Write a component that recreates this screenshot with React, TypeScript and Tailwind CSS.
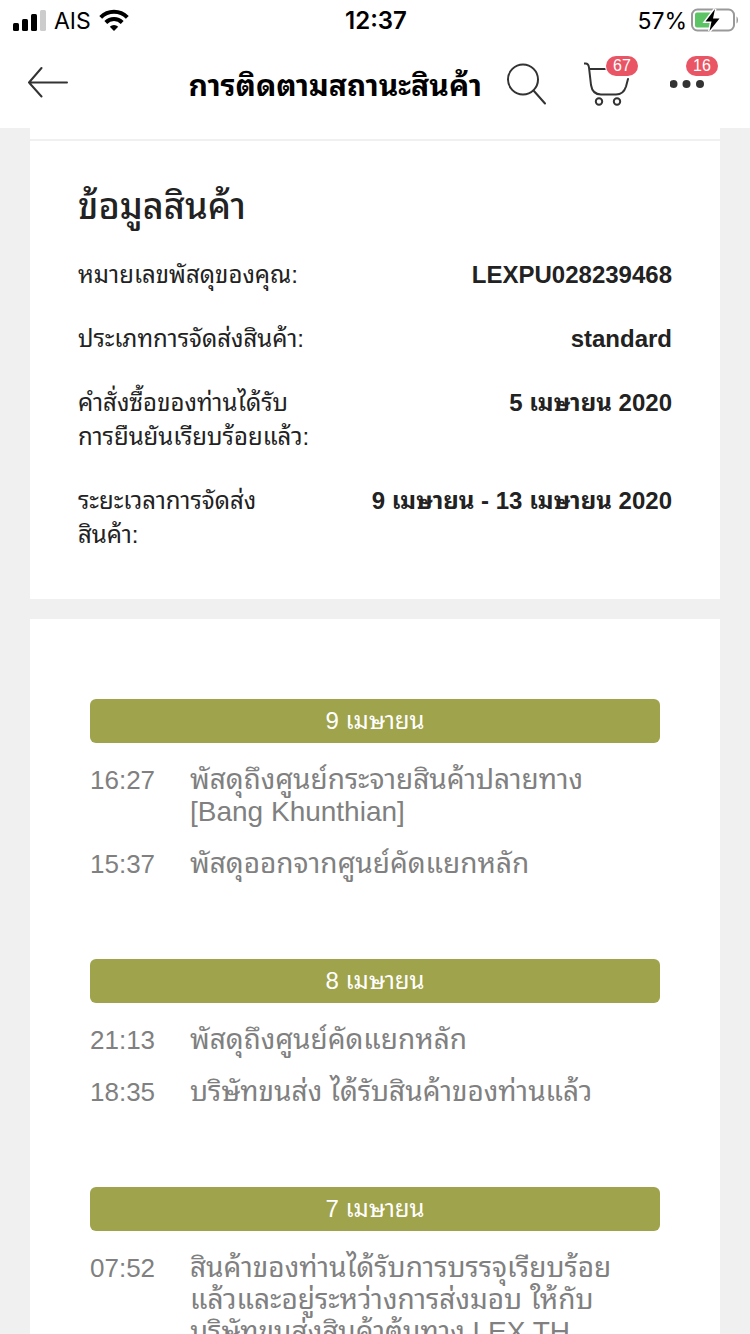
import React from "react"

type Detail = {
  label: string[]
  value: string
}

type TrackingEvent = {
  time: string
  lines: string[]
}

type TrackingDay = {
  date: string
  events: TrackingEvent[]
}

const details: Detail[] = [
  { label: ["หมายเลขพัสดุของคุณ:"], value: "LEXPU028239468" },
  { label: ["ประเภทการจัดส่งสินค้า:"], value: "standard" },
  {
    label: ["คำสั่งซื้อของท่านได้รับ", "การยืนยันเรียบร้อยแล้ว:"],
    value: "5 เมษายน 2020",
  },
  {
    label: ["ระยะเวลาการจัดส่ง", "สินค้า:"],
    value: "9 เมษายน - 13 เมษายน 2020",
  },
]

const days: TrackingDay[] = [
  {
    date: "9 เมษายน",
    events: [
      {
        time: "16:27",
        lines: ["พัสดุถึงศูนย์กระจายสินค้าปลายทาง", "[Bang Khunthian]"],
      },
      { time: "15:37", lines: ["พัสดุออกจากศูนย์คัดแยกหลัก"] },
    ],
  },
  {
    date: "8 เมษายน",
    events: [
      { time: "21:13", lines: ["พัสดุถึงศูนย์คัดแยกหลัก"] },
      { time: "18:35", lines: ["บริษัทขนส่ง ได้รับสินค้าของท่านแล้ว"] },
    ],
  },
  {
    date: "7 เมษายน",
    events: [
      {
        time: "07:52",
        lines: [
          "สินค้าของท่านได้รับการบรรจุเรียบร้อย",
          "แล้วและอยู่ระหว่างการส่งมอบ ให้กับ",
          "บริษัทขนส่งสินค้าต้นทาง LEX TH",
        ],
      },
    ],
  },
]

const StatusBar = () => (
  <div className="grid h-10 grid-cols-3 items-center pr-[11px] pl-[13px] font-['Inter',sans-serif] text-[23px] leading-7 text-black">
    <div className="flex items-center gap-2">
      <svg width="33" height="21" viewBox="0 0 33 21" aria-hidden="true">
        <rect x="0" y="13" width="6" height="8" rx="1.5" />
        <rect x="9" y="9" width="6" height="12" rx="1.5" />
        <rect x="18" y="4" width="6" height="17" rx="1.5" />
        <rect x="27" y="0" width="6" height="21" rx="1.5" fill="#cccccc" />
      </svg>
      <span className="pt-px">AIS</span>
      <svg width="30" height="22" viewBox="0 0 30 22" aria-hidden="true">
        <g fill="none" stroke="#000" strokeWidth="4">
          <path d="M1.7 8.3a18.8 18.8 0 0 1 26.6 0" />
          <path d="M6.8 13.5a11.6 11.6 0 0 1 16.4 0" />
        </g>
        <path d="M15 22l-4.2-4.3a6 6 0 0 1 8.4 0z" />
      </svg>
    </div>
    <span className="pt-0.5 text-center text-2xl font-semibold">12:37</span>
    <div className="flex items-center justify-end gap-1">
      <span className="pt-px">57%</span>
      <svg width="48" height="24" viewBox="0 0 48 24" aria-hidden="true">
        <rect
          x="1"
          y="1.5"
          width="42"
          height="21"
          rx="5.5"
          fill="none"
          stroke="#999"
          strokeWidth="2"
        />
        <path d="M45.5 8.5c2 1 2 6 0 7z" fill="#999" />
        <path
          d="M6 4.5h14v15H6a2 2 0 0 1-2-2v-11a2 2 0 0 1 2-2z"
          fill="#5dc466"
        />
        <path
          d="M24 1L14.5 13.500h6L18.500 23 28.500 10.500h-6.500z"
          stroke="#fff"
          strokeWidth="3"
          paintOrder="stroke"
        />
      </svg>
    </div>
  </div>
)

const Badge = ({ count }: { count: number }) => (
  <span className="flex h-5 w-8 items-center justify-center rounded-full bg-[#e95564] font-['Liberation_Sans',sans-serif] text-base leading-5 text-white ring-1 ring-white">
    {count}
  </span>
)

const NavBar = () => (
  <div className="flex h-22 items-center pr-11 pl-7">
    <button type="button" aria-label="ย้อนกลับ" className="pb-1">
      <svg
        width="40"
        height="32"
        viewBox="0 0 40 32"
        fill="none"
        stroke="#333"
        strokeWidth="2"
        strokeLinecap="round"
        strokeLinejoin="round"
      >
        <path d="M39 16.5H1M13.5 2L1 16.5l12.500 14" />
      </svg>
    </button>
    <h1 className="flex-1 pt-1 pr-6 text-right text-[30px] leading-10 font-bold whitespace-nowrap text-black">
      การติดตามสถานะสินค้า
    </h1>
    <div className="flex items-center gap-[38px]">
      <button type="button" aria-label="ค้นหา">
        <svg
          width="40"
          height="42"
          viewBox="0 0 40 42"
          fill="none"
          stroke="#333"
          strokeWidth="2"
          strokeLinecap="round"
        >
          <circle cx="17" cy="16.500" r="15" />
          <path d="M27.500 27.500L39 40.500" />
        </svg>
      </button>
      <button type="button" aria-label="ตะกร้าสินค้า" className="relative">
        <svg
          width="48"
          height="44"
          viewBox="0 0 48 44"
          fill="none"
          stroke="#333"
          strokeWidth="2"
          strokeLinecap="round"
          strokeLinejoin="round"
        >
          <path d="M0 1.500h1.500q3 0 3.500 4L7 23Q8.500 32.500 17 32.500h15q7.500 0 10-8L44 17M5.500 7H22" />
          <circle cx="15" cy="39.500" r="3.200" />
          <circle cx="33" cy="39.500" r="3.200" />
        </svg>
        <div className="absolute -top-1.5 left-[22px]">
          <Badge count={67} />
        </div>
      </button>
      <button
        type="button"
        aria-label="เพิ่มเติม"
        className="relative flex h-11 items-center"
      >
        <svg width="36" height="8" viewBox="0 0 36 8" fill="#333">
          <circle cx="3.500" cy="4" r="4" />
          <circle cx="16.500" cy="4" r="4" />
          <circle cx="30" cy="4" r="4" />
        </svg>
        <div className="absolute -top-1.5 left-4">
          <Badge count={16} />
        </div>
      </button>
    </div>
  </div>
)

const ProductInfo = () => (
  <section className="bg-white pt-[11px]">
    <div className="border-t-2 border-[#f0f0f0] px-12 pt-10 pb-[47px] text-[#222]">
      <h2 className="text-4xl leading-13 font-medium">ข้อมูลสินค้า</h2>
      <dl className="mt-[25px] flex flex-col gap-[30px] text-2xl leading-[34px]">
        {details.map((detail) => (
          <div key={detail.value} className="flex justify-between">
            <dt className="whitespace-nowrap">
              {detail.label.map((line) => (
                <span key={line} className="block">
                  {line}
                </span>
              ))}
            </dt>
            <dd className="font-bold whitespace-nowrap">{detail.value}</dd>
          </div>
        ))}
      </dl>
    </div>
  </section>
)

const DayGroup = ({ day }: { day: TrackingDay }) => (
  <li>
    <h3 className="rounded-md bg-[#9fa34b] text-center text-2xl leading-11 text-white">
      {day.date}
    </h3>
    <ul className="mt-[21px] flex flex-col gap-5">
      {day.events.map((event) => (
        <li key={event.time} className="flex leading-8 text-[#808080]">
          <time className="w-25 shrink-0 text-[26px]">{event.time}</time>
          <p className="text-[28px] whitespace-nowrap">
            {event.lines.map((line) => (
              <span key={line} className="block">
                {line}
              </span>
            ))}
          </p>
        </li>
      ))}
    </ul>
  </li>
)

const App = () => {
  return (
    <div className="flex h-screen flex-col bg-[#f0f0f0] font-['Liberation_Sans','Thonburi','Noto_Sans_Thai_Looped','Loma','Garuda','Waree',sans-serif]">
      <header className="shrink-0 bg-white">
        <StatusBar />
        <NavBar />
      </header>
      <main className="flex min-h-0 flex-1 flex-col gap-5 overflow-y-auto px-[30px] [scrollbar-width:none]">
        <ProductInfo />
        <section className="bg-white px-15 py-20">
          <ul className="flex flex-col gap-[79px]">
            {days.map((day) => (
              <DayGroup key={day.date} day={day} />
            ))}
          </ul>
        </section>
      </main>
    </div>
  )
}

export default App
